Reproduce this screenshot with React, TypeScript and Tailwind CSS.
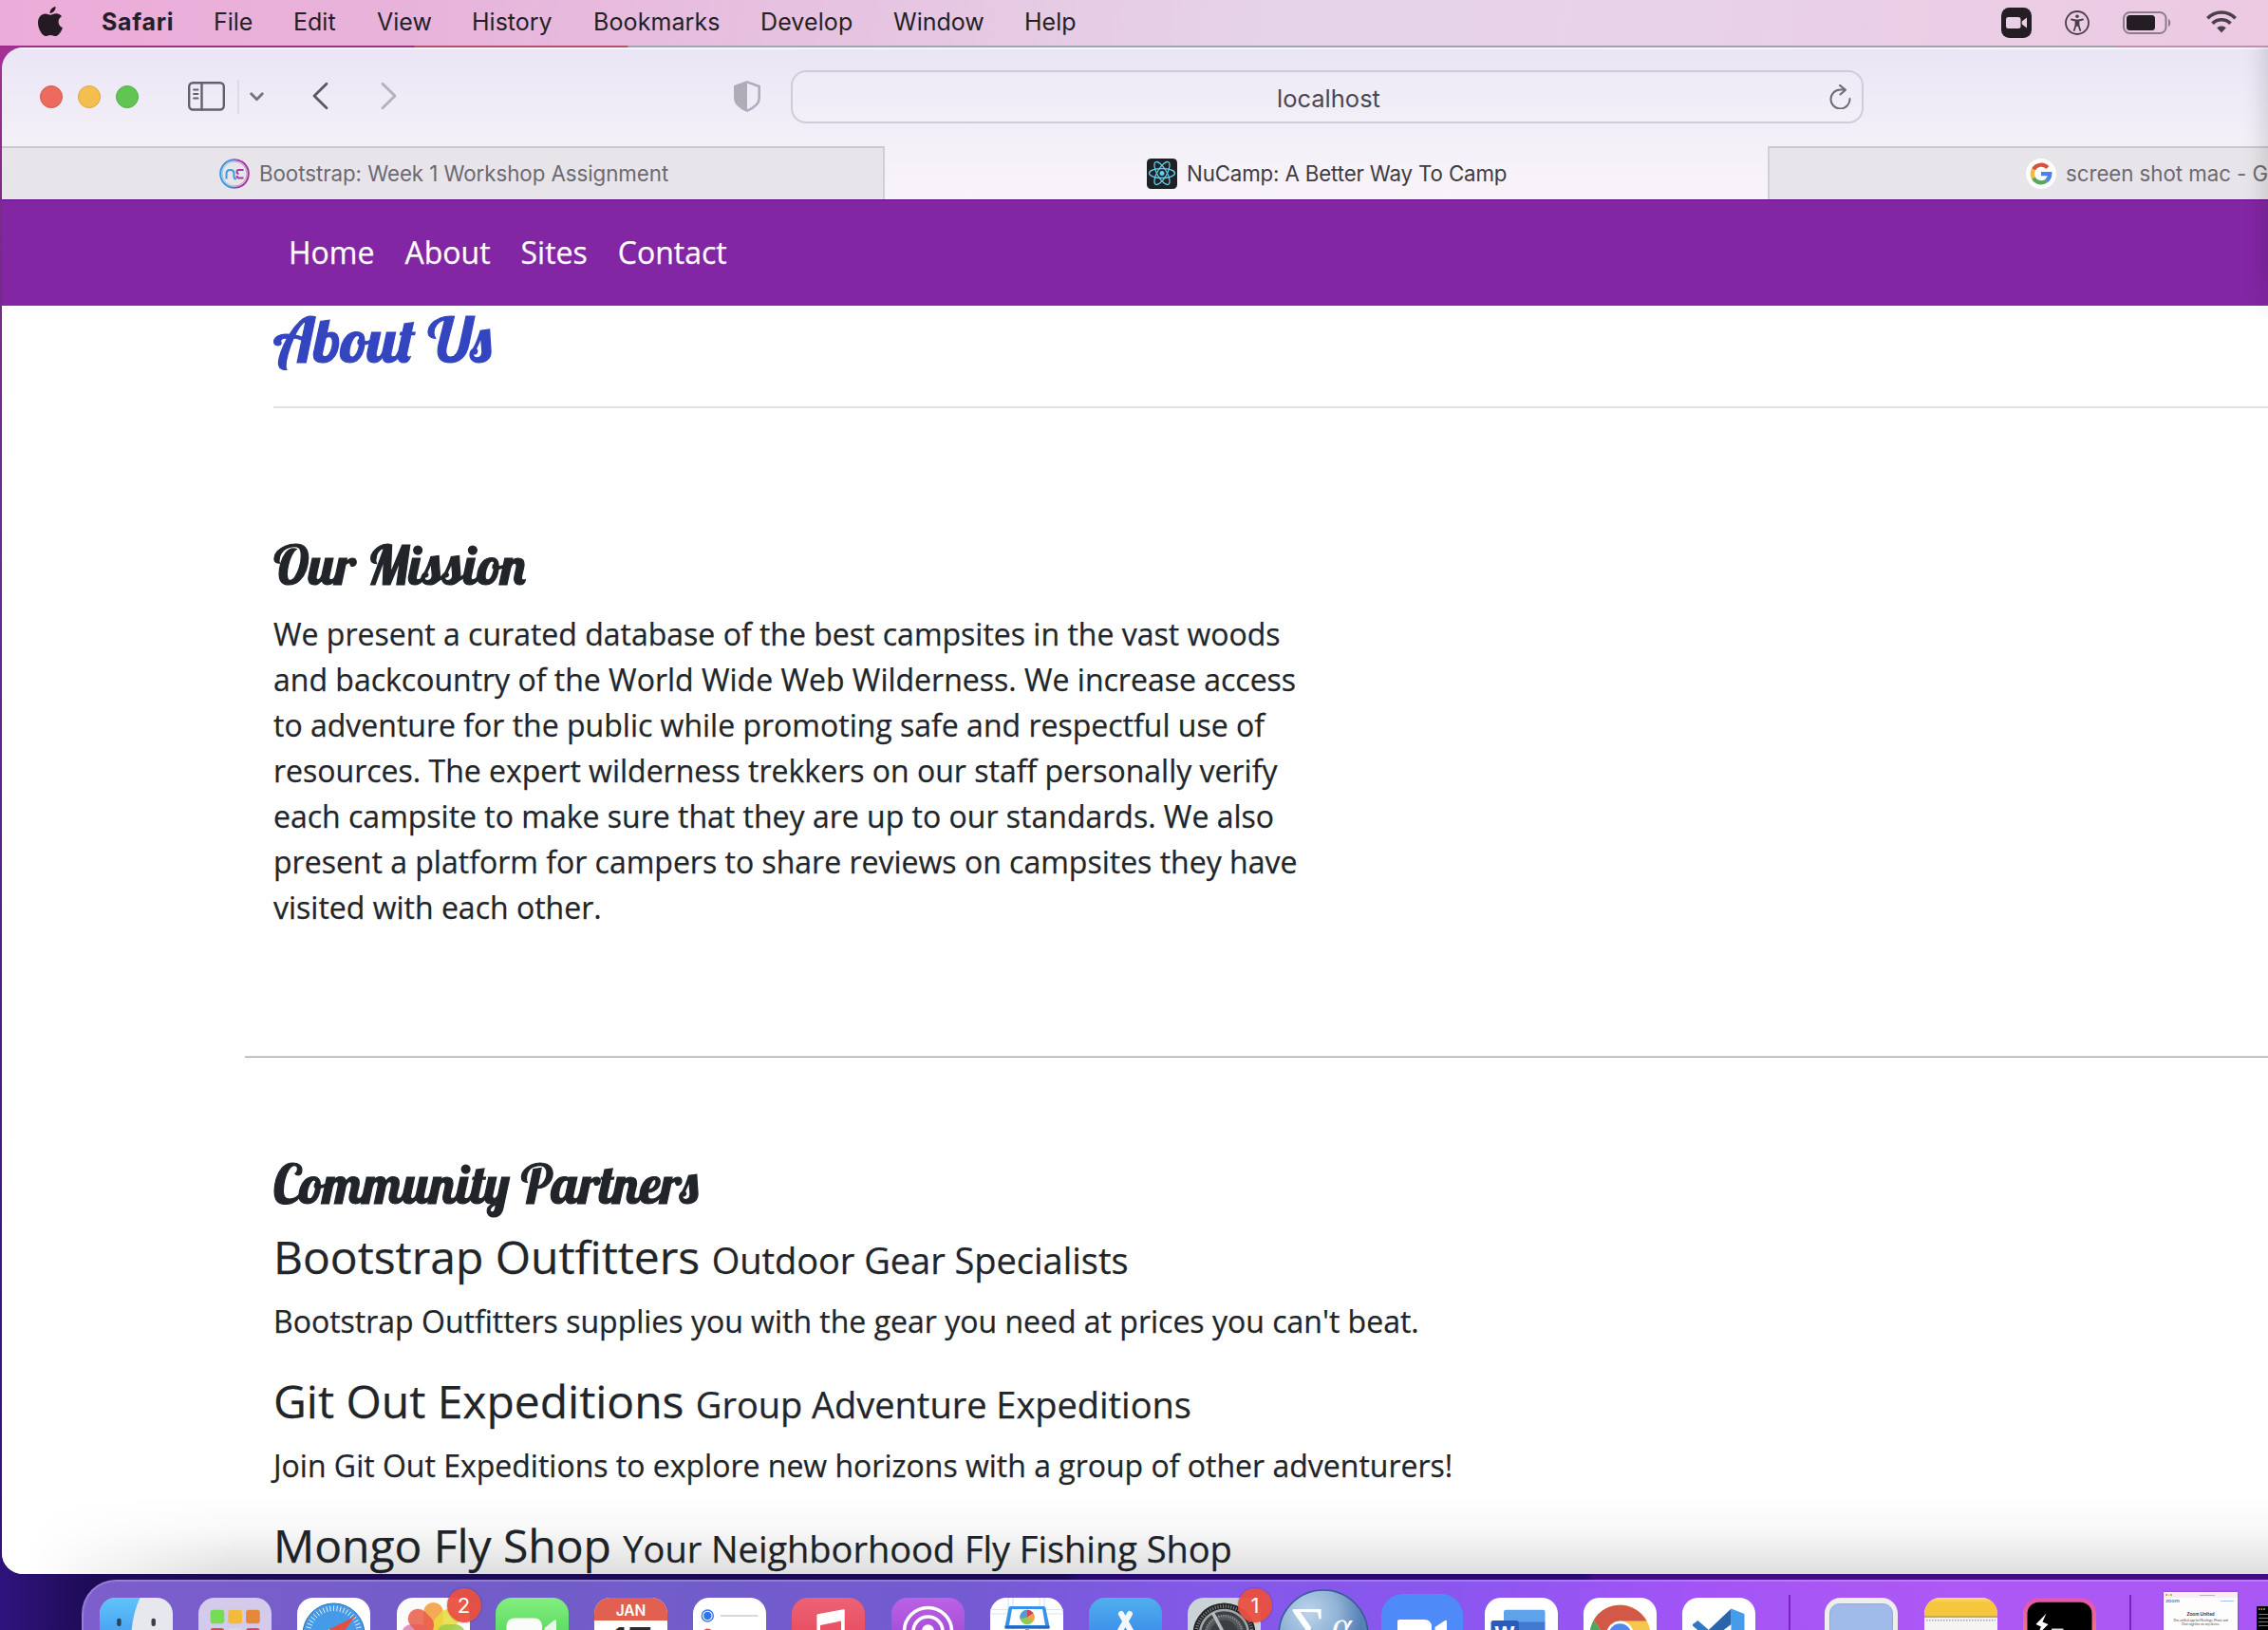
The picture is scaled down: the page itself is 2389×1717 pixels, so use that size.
import React from "react";

const UI = "font-['Inter','Liberation_Sans',sans-serif]";

const menus = [
  { label: "Safari", cls: "w-[118px] font-bold tracking-[0.7px]" },
  { label: "File", cls: "w-[84px]" },
  { label: "Edit", cls: "w-[88px]" },
  { label: "View", cls: "w-[100px]" },
  { label: "History", cls: "w-[128px]" },
  { label: "Bookmarks", cls: "w-[176px] tracking-[0.1px]" },
  { label: "Develop", cls: "w-[140px] tracking-[0.1px]" },
  { label: "Window", cls: "w-[138px]" },
  { label: "Help", cls: "w-[90px]" },
];

function MenuBar() {
  return (
    <header className="flex h-12 shrink-0 items-center bg-[linear-gradient(100deg,#ecacd9_0%,#e8b3db_18%,#e6c4e1_38%,#e6d3e8_56%,#e8d2e7_75%,#edc9e2_100%)] text-[#241f26]">
      <svg className="ml-[40px] mb-0.5 mr-[41px] h-8 w-[26px] shrink-0" viewBox="0 0 26 32" fill="#231a22">
        <path d="M18.6 0c.3 3.3-2.6 7-6 6.900C12.200 3.700 15.300.3 18.600 0z" />
        <path d="M13.300 8.700c1.300 0 3.200-1.500 5.900-1.500 2.300 0 4.500 1.200 5.800 3-5.100 3-4.200 10 1 12-1.500 4.300-4.700 8.900-7.700 8.900-1.900 0-2.700-1.200-5.100-1.200s-3.300 1.200-5 1.200C4.800 31.100 0 24 0 17.100c0-6.200 3.700-9.700 7.600-9.700 2.500 0 4.300 1.300 5.700 1.300z" />
      </svg>
      <nav className={`mb-[3px] flex text-[25px] leading-8 ${UI}`}>
        {menus.map((m) => (
          <span key={m.label} className={`shrink-0 whitespace-nowrap ${m.cls}`}>{m.label}</span>
        ))}
      </nav>
      <div className="ml-auto mr-[33px] flex items-center">
        <svg className="mr-[35px] size-8" viewBox="0 0 32 32">
          <rect width="32" height="32" rx="8.500" fill="#241e24" />
          <rect x="5" y="10" width="15.500" height="12" rx="2.500" fill="#ead0e6" />
          <path d="M21.800 14.500 27 10.500v11l-5.200-4z" fill="#ead0e6" />
        </svg>
        <svg className="mr-[35px] size-[26px]" viewBox="0 0 26 26" fill="none" stroke="#4a3f4b" strokeWidth="1.800" strokeLinecap="round" strokeLinejoin="round">
          <circle cx="13" cy="13" r="12" />
          <circle cx="13" cy="6.200" r="1.500" fill="#4a3f4b" strokeWidth=".6" />
          <path d="M7 9.500l4.500 1h3l4.500-1M11.500 10.500v5l-1.700 5.500M14.500 10.500v5l1.700 5.500M13 11v5" />
        </svg>
        <svg className="mr-[37px] h-6 w-[51px]" viewBox="0 0 51 24">
          <rect x="1" y="1" width="44.500" height="22" rx="6.500" fill="none" stroke="#8d7d8c" strokeWidth="2" />
          <rect x="4" y="4" width="30" height="16" rx="3.500" fill="#241e24" />
          <path d="M48 8c3 1 3 7 0 8z" fill="#8d7d8c" />
        </svg>
        <svg className="mb-0.5 h-6 w-8" viewBox="0 0 32 24" fill="none" stroke="#4a3f4b" strokeWidth="3.600">
          <path d="M1.300 8.300C9.500-.1 22.500-.1 30.700 8.300M6.500 13.700c5.400-5.300 13.600-5.300 19 0" />
          <path d="M11.200 18.300c2.800-2.400 6.800-2.400 9.600 0L16 23.500z" fill="#4a3f4b" stroke="none" />
        </svg>
      </div>
    </header>
  );
}

function Toolbar() {
  return (
    <div className="flex h-[104px] shrink-0 items-start border-t-2 border-white/70">
      <div className="ml-10 mt-[38px] flex gap-4">
        <span className="size-6 rounded-full border border-[#d9544a] bg-[#ed6a5e]" />
        <span className="size-6 rounded-full border border-[#dba53c] bg-[#f5bf4f]" />
        <span className="size-6 rounded-full border border-[#4fae45] bg-[#61c554]" />
      </div>
      <svg className="ml-[52px] mt-[34px] h-[31px] w-[39px]" viewBox="0 0 39 31" fill="none" stroke="#645f6b" strokeWidth="2.400" strokeLinecap="round">
        <rect x="1.200" y="1.200" width="36.600" height="28.300" rx="4" />
        <path d="M14.500 1.500v28" />
        <path d="M6 8.500h4.500M6 13h4.500M6 17.500h4.500" strokeWidth="1.800" />
      </svg>
      <span className="ml-[13px] mt-8 h-9 w-0.5 bg-[#dedae6]" />
      <svg className="ml-[11px] mt-[45px] h-[10px] w-[15px]" viewBox="0 0 15 10" fill="none" stroke="#77717f" strokeWidth="2.800" strokeLinecap="round" strokeLinejoin="round">
        <path d="M1.700 1.700l5.800 6 5.800-6" />
      </svg>
      <svg className="ml-[51px] mt-[34px] h-[30px] w-[17px]" viewBox="0 0 17 30" fill="none" stroke="#5c5763" strokeWidth="2.800" strokeLinecap="round" strokeLinejoin="round">
        <path d="M15 2.200 2 15l13 12.800" />
      </svg>
      <svg className="ml-[55px] mt-[34px] h-[30px] w-[17px]" viewBox="0 0 17 30" fill="none" stroke="#b5b0bd" strokeWidth="2.800" strokeLinecap="round" strokeLinejoin="round">
        <path d="M2 2.200 15 15 2 27.800" />
      </svg>
      <svg className="ml-[355px] mt-[33px] h-[33px] w-7" viewBox="0 0 28 33">
        <path d="M14 1.300 26.700 6v12.500C26.700 25 20 29 14 31.700 8 29 1.300 25 1.300 18.500V6z" fill="none" stroke="#b0abb8" strokeWidth="2.500" strokeLinejoin="round" />
        <path d="M14 1v31C7 29 .5 25 .5 18V5.500z" fill="#b0abb8" />
      </svg>
      <div className="ml-8 mt-[22px] flex h-14 w-[1130px] items-center rounded-2xl border-2 border-[#d0cbd9] bg-white/10">
        <span className={`ml-[510px] mt-[3px] text-[25.500px] leading-8 text-[#4b474f] ${UI}`}>localhost</span>
        <svg className="ml-auto mr-[11px] h-[26px] w-[23px]" viewBox="0 0 23 26" fill="none" stroke="#6f6a76" strokeWidth="2" strokeLinecap="round" strokeLinejoin="round">
          <path d="M21.500 15A10 10 0 1 1 11.500 5.500h5.500M11 .9l6 4.800-5.500 4.800" />
        </svg>
      </div>
    </div>
  );
}

function Tabs() {
  return (
    <div className={`flex h-14 shrink-0 text-[22.300px] leading-none tracking-[-0.05px] ${UI}`}>
      <div className="flex h-full w-[930px] items-center border-r-2 border-t-2 border-r-[#d3cfd7] border-t-[#cbc7d0] bg-[#e8e5ea] text-[#6d6971]">
        <svg className="ml-[229px] size-8 shrink-0" viewBox="0 0 32 32" fill="none" strokeWidth="2">
          <defs>
            <linearGradient id="nc" x1="0" x2="1">
              <stop offset=".35" stopColor="#3f97dc" />
              <stop offset=".65" stopColor="#a3389f" />
            </linearGradient>
          </defs>
          <circle cx="16" cy="16" r="14.800" stroke="url(#nc)" />
          <circle cx="16" cy="16" r="13" stroke="url(#nc)" strokeWidth=".8" opacity=".6" />
          <path d="M7.500 21.500v-5.500q0-4 4-4t4 4v3q0 2.500 2.500 2.500" stroke="#3f97dc" />
          <path d="M25.500 12H20.500q-2 0-2 2t2 2M25.500 20.500H21q-2.500 0-2.500-2.500" stroke="#a3389f" />
        </svg>
        <span className="ml-[10px] mt-[1px] whitespace-nowrap">Bootstrap: Week 1 Workshop Assignment</span>
      </div>
      <div className="flex h-full w-[930px] items-center pt-0.5 text-[#3f3b43]">
        <svg className="ml-[276px] size-8 shrink-0" viewBox="0 0 32 32" fill="none" stroke="#61cfee" strokeWidth="1.300">
          <rect width="32" height="32" rx="4.500" fill="#202124" stroke="none" />
          <circle cx="16" cy="15.500" r="2.500" fill="#61cfee" stroke="none" />
          <ellipse cx="16" cy="15.500" rx="13.500" ry="5" />
          <ellipse cx="16" cy="15.500" rx="13.500" ry="5" transform="rotate(60 16 15.500)" />
          <ellipse cx="16" cy="15.500" rx="13.500" ry="5" transform="rotate(120 16 15.500)" />
        </svg>
        <span className="ml-[10px] mt-[1px] whitespace-nowrap tracking-[-0.15px]">NuCamp: A Better Way To Camp</span>
      </div>
      <div className="flex h-full w-[527px] items-center overflow-hidden border-l-2 border-t-2 border-l-[#d3cfd7] border-t-[#cbc7d0] bg-[#e8e5ea] text-[#6d6971]">
        <svg className="ml-[270px] size-8 shrink-0" viewBox="0 0 32 32" fill="none" strokeWidth="4.200">
          <circle cx="16" cy="16" r="16" fill="white" />
          <path d="M22.800 9.600A9.300 9.300 0 0 0 7.900 11.500" stroke="#d9503f" />
          <path d="M7.900 11.500a9.700 9.700 0 0 0 0 9" stroke="#f3bc3f" />
          <path d="M7.900 20.500A9.300 9.300 0 0 0 21.800 23.300" stroke="#58a55c" />
          <path d="M21.800 23.300a9.600 9.600 0 0 0 3.500-7.200H16" stroke="#4d80ea" />
        </svg>
        <span className="ml-[10px] mt-[1px] whitespace-nowrap">screen shot mac - G</span>
      </div>
    </div>
  );
}

const partners = [
  { name: "Bootstrap Outfitters", tag: "Outdoor Gear Specialists", text: "Bootstrap Outfitters supplies you with the gear you need at prices you can't beat." },
  { name: "Git Out Expeditions", tag: "Group Adventure Expeditions", text: "Join Git Out Expeditions to explore new horizons with a group of other adventurers!" },
  { name: "Mongo Fly Shop", tag: "Your Neighborhood Fly Fishing Shop", text: "" },
];

const mission = [
  "We present a curated database of the best campsites in the vast woods",
  "and backcountry of the World Wide Web Wilderness. We increase access",
  "to adventure for the public while promoting safe and respectful use of",
  "resources. The expert wilderness trekkers on our staff personally verify",
  "each campsite to make sure that they are up to our standards. We also",
  "present a platform for campers to share reviews on campsites they have",
  "visited with each other.",
];

const SCRIPT = "font-['Lobster','Liberation_Serif',serif] font-medium whitespace-nowrap [-webkit-text-stroke:1.2px_currentColor]";

function Page() {
  return (
    <div className="relative flex min-h-0 flex-1 flex-col overflow-hidden bg-white font-['Open_Sans',sans-serif] text-[32px] leading-[48px] text-[#212529] [-webkit-text-stroke:0.25px_currentColor]">
      <nav className="flex h-28 shrink-0 items-center gap-8 bg-[#8326a4] pl-[302px] text-white shadow-[inset_0_1px_0_#5c0a86]">
        <span>Home</span>
        <span>About</span>
        <span>Sites</span>
        <span>Contact</span>
      </nav>
      <div className="ml-[286px] h-[108px] shrink-0 border-b-2 border-[#e2e2e2]">
        <h1 className={`text-[64px] leading-[72px] text-[#3445c0] ${SCRIPT}`}>About Us</h1>
      </div>
      <section className="ml-[286px] h-[682px] shrink-0 pt-[131px]">
        <h2 className={`h-[83px] text-[56px] leading-[68px] ${SCRIPT}`}>Our Mission</h2>
        <p className="whitespace-nowrap">
          {mission.map((l) => (
            <span key={l} className="block">{l}</span>
          ))}
        </p>
      </section>
      <hr className="ml-[256px] h-0.5 shrink-0 border-0 border-b border-[#999999] bg-[#e9e9e9]" />
      <section className="ml-[286px] shrink-0 pt-[99px]">
        <h2 className={`h-[82px] text-[56px] leading-[68px] ${SCRIPT}`}>Community Partners</h2>
        {partners.map((p) => (
          <div key={p.name} className="h-[152px] whitespace-nowrap">
            <h4 className="mb-[15px] h-[58px] text-[48px] leading-[58px] tracking-[-0.03px]">
              {p.name} <span className="text-[38px]">{p.tag}</span>
            </h4>
            <p>{p.text}</p>
          </div>
        ))}
      </section>
      <div className="absolute inset-x-0 bottom-0 h-20 bg-[linear-gradient(to_top,rgba(0,0,0,0.13),rgba(0,0,0,0.03)_55%,transparent)] [mask-image:linear-gradient(to_right,transparent_1%,black_10%)]" />
    </div>
  );
}

const ICON = "size-[77px] shrink-0";

function Tile({ fill = "white" }: { fill?: string }) {
  return <rect width="77" height="77" rx="17" fill={fill} />;
}

function Badge({ n }: { n: string }) {
  return (
    <span className={`absolute -top-[10px] left-[53px] flex size-9 items-center justify-center rounded-full bg-[#e9503f]/95 text-[22px] leading-none text-white shadow-[0_0_2px_rgba(0,0,0,0.4)] ${UI}`}>{n}</span>
  );
}

const petals = ["#f29a38", "#e8dc3c", "#9ccb46", "#5cb98f", "#6aa5d8", "#9c7cc6", "#d77fb4", "#ea5a48"];
const ticks = Array.from({ length: 48 }, (_, i) => i * 7.5);

function Dock() {
  return (
    <div className="ml-[86px] mt-1.5 flex h-[120px] w-[2400px] shrink-0 items-start gap-[27.200px] rounded-tl-[36px] border-l-2 border-t-2 border-white/20 bg-[linear-gradient(to_right,#7c5ecc_0%,#715dc8_20%,#735bd0_38%,#8458ea_50%,#8a56ef_60%,#a354f6_71%,#ae58f5_82%,#a857f4_100%)] bg-origin-border pl-[17px] pt-[17px]">
      <svg className={ICON} viewBox="0 0 77 77">
        <defs>
          <clipPath id="tile"><rect width="77" height="77" rx="17" /></clipPath>
          <linearGradient id="finder" x2="0" y2="1"><stop stopColor="#60c4fa" /><stop offset="1" stopColor="#2f7fe8" /></linearGradient>
        </defs>
        <Tile fill="#e6e8ed" />
        <path clipPath="url(#tile)" d="M0 0h42.500C36 14 33 30 33 46h10v31H0z" fill="url(#finder)" />
        <rect x="18.200" y="21.700" width="4.400" height="8.300" rx="2" fill="#2d4358" />
        <rect x="54.500" y="21.700" width="4.400" height="8.300" rx="2" fill="#3c4148" />
      </svg>
      <svg className={ICON} viewBox="0 0 77 77">
        <Tile fill="#d3cbe9" />
        <rect x="12.600" y="12.700" width="14.700" height="14.500" rx="3" fill="#77dc55" />
        <rect x="31.400" y="12.700" width="14.700" height="14.500" rx="3" fill="#f3ba3c" />
        <rect x="50.100" y="12.700" width="14.700" height="14.500" rx="3" fill="#e5883a" />
        <rect x="12.600" y="32" width="14.700" height="14.500" rx="3" fill="#e3483d" />
        <rect x="31.400" y="32" width="14.700" height="14.500" rx="3" fill="#cfdbe6" />
        <rect x="50.100" y="32" width="14.700" height="14.500" rx="3" fill="#e4446a" />
      </svg>
      <svg className={ICON} viewBox="0 0 77 77">
        <Tile />
        <circle cx="38.500" cy="38.500" r="32.500" fill="#459be8" stroke="#2d6fae" strokeWidth="1" />
        {ticks.map((a) => (
          <path key={a} d="M38.500 8.500v5.500" stroke="white" strokeWidth=".8" transform={`rotate(${a} 38.500 38.500)`} />
        ))}
        <path d="M61.500 19.500 33 33.500l10 10z" fill="#e4503f" />
        <path d="M15.500 57.500 33.500 33l10 10.500z" fill="#eef0f2" />
      </svg>
      <div className="relative">
        <svg className={ICON} viewBox="0 0 77 77">
          <Tile fill="#fbfbfb" />
          {petals.map((c, i) => (
            <rect key={c} x="28" y="5" width="21" height="30" rx="10.500" fill={c} opacity=".85" transform={`rotate(${i * 45} 38.500 38.500)`} />
          ))}
        </svg>
        <Badge n="2" />
      </div>
      <svg className={ICON} viewBox="0 0 77 77">
        <defs><linearGradient id="ft" x2="0" y2="1"><stop stopColor="#84ee7e" /><stop offset="1" stopColor="#33c648" /></linearGradient></defs>
        <Tile fill="url(#ft)" />
        <rect x="11.500" y="21.500" width="37.500" height="34" rx="8" fill="#fafcfa" />
        <path d="M51.500 32 62 23.500q2-1 2 1.500v27q0 2.500-2 1.500L51.500 45z" fill="#e9f7e8" />
      </svg>
      <svg className={ICON} viewBox="0 0 77 77">
        <Tile />
        <path clipPath="url(#tile)" d="M0 0h77v24H0z" fill="#e2604f" />
        <text x="38.500" y="18.500" textAnchor="middle" fontSize="15.500" fontWeight="600" fill="white" fontFamily="Inter">JAN</text>
        <text x="39" y="65" textAnchor="middle" fontSize="46" fill="#2b2b2d" fontFamily="Inter">17</text>
      </svg>
      <svg className={ICON} viewBox="0 0 77 77">
        <Tile />
        <circle cx="15.300" cy="19" r="6" fill="none" stroke="#3478f0" strokeWidth="1.400" />
        <circle cx="15.300" cy="19" r="4.200" fill="#2f73ee" />
        <path d="M29 19h39.500" stroke="#b4b4b8" strokeWidth="1.200" />
        <circle cx="15.300" cy="38.500" r="6" fill="#e3483d" />
      </svg>
      <svg className={ICON} viewBox="0 0 77 77">
        <defs><linearGradient id="mu" x2="0" y2="1"><stop stopColor="#ec6275" /><stop offset="1" stopColor="#e63b4c" /></linearGradient></defs>
        <Tile fill="url(#mu)" />
        <path d="M26.400 50V18.500q0-1 1-1.200L54.500 12.300q1.200-.2 1.200 1V50h-3.700V24.500L30 29v21z" fill="white" />
      </svg>
      <svg className={ICON} viewBox="0 0 77 77">
        <defs><linearGradient id="po" x2="0" y2="1"><stop stopColor="#bb62e6" /><stop offset="1" stopColor="#9038c8" /></linearGradient></defs>
        <Tile fill="url(#po)" />
        <circle cx="38.500" cy="35.500" r="25" fill="none" stroke="white" strokeWidth="3.600" />
        <circle cx="38.500" cy="35.500" r="15.500" fill="none" stroke="white" strokeWidth="3.600" />
        <circle cx="38.500" cy="34.500" r="6.300" fill="white" />
      </svg>
      <svg className={ICON} viewBox="0 0 77 77">
        <Tile />
        <path d="M19 0v77M24 0v77M52 0v77M57 0v77M0 12.500h77M0 17h77" stroke="#d3e8f5" strokeWidth="1.200" />
        <path d="M21 9h35.500q1.500 0 1.800 1.500l4.200 20q.2 2-1.500 2H17q-1.700 0-1.500-2l4-20Q19.500 9 21 9z" fill="#3793ea" />
        <path d="M23 12h32l3 17H20z" fill="white" />
        <path d="M15.500 29.500h47v3h-47z" fill="#2467bd" />
        <circle cx="39" cy="20.500" r="7.700" fill="#8fca52" />
        <path d="M39 20.500v-7.700a7.700 7.700 0 0 0-7.500 9.500z" fill="#4a9fd8" />
        <path d="M39 20.500v-7.700a7.700 7.700 0 0 1 6.500 3.800z" fill="#cd4360" />
        <path d="M39 20.500l6.500-3.900a7.700 7.700 0 0 1-.5 8.700z" fill="#f0a53d" />
        <path d="M37 32.500h4V50h-4z" fill="#9aa3ad" />
      </svg>
      <svg className={ICON} viewBox="0 0 77 77">
        <defs><linearGradient id="as" x2="0" y2="1"><stop stopColor="#4fb0ec" /><stop offset="1" stopColor="#2a6de8" /></linearGradient></defs>
        <Tile fill="url(#as)" />
        <path d="M34 17l17 30M43 17L26 47" stroke="#f3f8fc" strokeWidth="6" strokeLinecap="round" />
      </svg>
      <div className="relative">
        <svg className={ICON} viewBox="0 0 77 77">
          <Tile fill="#ccd3d7" />
          <circle cx="38.500" cy="38.500" r="33" fill="#1f2122" />
          <circle cx="38.500" cy="38.500" r="29.500" fill="none" stroke="#7d8183" strokeWidth="3.500" strokeDasharray="1.200 1.600" />
          <circle cx="38.500" cy="38.500" r="25.500" fill="#3e4143" stroke="#a3a7a9" strokeWidth="2.500" />
          <circle cx="38.500" cy="38.500" r="19.500" fill="#55585a" stroke="#858889" strokeWidth="2.500" strokeDasharray="1.500 1" />
          <circle cx="38.500" cy="38.500" r="15" fill="#3c3f41" />
          <path d="M38.500 38.500 26.500 16M38.500 38.500H64M38.500 38.500 25 62" stroke="#b9bdbf" strokeWidth="3.500" />
        </svg>
        <Badge n="1" />
      </div>
      <svg className="-ml-[9px] -mr-[14px] -mt-[9px] size-[96px] shrink-0" viewBox="0 0 96 96">
        <defs><radialGradient id="sg" cx=".33" cy=".25" r=".6"><stop stopColor="#bcd5ec" /><stop offset=".55" stopColor="#91b3d6" /><stop offset="1" stopColor="#5681b5" /></radialGradient></defs>
        <circle cx="48" cy="48" r="47" fill="url(#sg)" stroke="#345b94" strokeWidth="1.500" />
        <text x="13" y="64" fontSize="66" fill="white" fontFamily="Liberation Serif">Σ</text>
        <text x="57" y="52" fontSize="40" fontStyle="italic" fill="white" fontFamily="Liberation Serif">α</text>
      </svg>
      <svg className="-mr-[5px] -mt-1 size-[86px] shrink-0" viewBox="0 0 86 86">
        <rect width="86" height="86" rx="23" fill="#4f8bf8" />
        <path d="M17 29q0-2 2-2h26q8 0 8 8v23H25q-8 0-8-8zM56.500 35l10.500-7q2-1 2 1v28l-12.500-8z" fill="white" />
      </svg>
      <svg className={ICON} viewBox="0 0 77 77">
        <Tile />
        <path d="M20 15q0-2.300 2.300-2.300h39q2.200 0 2.200 2.300v11H20z" fill="#5ea3ea" />
        <path d="M20 25.600h43.500v13H20z" fill="#4079cf" />
        <rect x="6.500" y="24" width="29.300" height="29" rx="2.500" fill="#2a5bbb" />
        <text x="21" y="45.500" textAnchor="middle" fontSize="21" fontWeight="700" fill="white" fontFamily="Inter">W</text>
      </svg>
      <svg className={ICON} viewBox="0 0 77 77">
        <Tile />
        <circle cx="38.500" cy="39.500" r="32" fill="#f4c84f" />
        <path d="M10.800 23.500A32 32 0 0 1 66.500 24.500H38.500L25 45z" fill="#d25847" />
        <path d="M10.800 23.500 26 47l12.500 24.500A32 32 0 0 1 10.800 23.500z" fill="#4ea665" />
        <circle cx="38.500" cy="39" r="14.500" fill="white" />
        <circle cx="38.500" cy="39" r="11.800" fill="#5089ee" />
      </svg>
      <svg className={ICON} viewBox="0 0 77 77">
        <Tile />
        <path d="M51.500 11.500 65.500 17v42l-14 6z" fill="#469ce9" />
        <path d="M51.500 11.500 14 47l6 5 31.500-24z" fill="#2965a9" />
        <path d="M11 28 16.500 24l36.500 32-2 8.500-40-35z" fill="#2f78c4" />
      </svg>
      <span className="ml-[8px] mr-[9px] -mt-[3px] h-20 w-0.5 shrink-0 bg-[#7a22c4]" />
      <svg className={ICON} viewBox="0 0 77 77">
        <Tile fill="#eeeef0" />
        <rect x="5.500" y="6.500" width="66" height="66" rx="10" fill="#a0bbea" stroke="#8fa9d8" strokeWidth="1" />
      </svg>
      <svg className={ICON} viewBox="0 0 77 77">
        <defs><linearGradient id="no" x2="0" y2="1"><stop stopColor="#fadc73" /><stop offset=".26" stopColor="#f5c63e" /></linearGradient></defs>
        <Tile fill="#f5f4f2" />
        <path clipPath="url(#tile)" d="M0 0h77v20H0z" fill="url(#no)" />
        <path d="M0 20.200h77" stroke="#a88c4a" strokeWidth="1.200" />
        <path d="M2 23.700h73" stroke="#a9a8a6" strokeWidth="1.500" strokeDasharray="1.500 1.500" />
      </svg>
      <svg className={ICON} viewBox="0 0 77 77">
        <defs><linearGradient id="wp" x2="0" y2="1"><stop stopColor="#e653b0" /><stop offset=".6" stopColor="#ee8070" /></linearGradient></defs>
        <Tile fill="url(#wp)" />
        <rect x="4.500" y="4.700" width="68" height="68" rx="12" fill="black" />
        <path d="M24.500 16.500 13.500 28l5.500 2.500L14.500 40 26.500 28l-6-2.500z" fill="white" />
        <path d="M30 33.500h12.500" stroke="#ddd" strokeWidth="2" />
      </svg>
      <span className="ml-[8px] mr-[7px] -mt-[3px] h-20 w-0.5 shrink-0 bg-[#7a22c4]" />
      <div className="-mt-1.5 h-16 w-[78px] shrink-0 overflow-hidden bg-[#fdfdfe] font-['Lato',sans-serif] shadow-[0_0_2px_rgba(0,0,0,0.3)]">
        <div className="flex h-[6px] items-center gap-px bg-[#f6eef4] pl-0.5">
          <span className="size-[1.500px] rounded-full bg-[#ed6a5e]" />
          <span className="size-[1.500px] rounded-full bg-[#f5bf4f]" />
          <span className="size-[1.500px] rounded-full bg-[#61c554]" />
          <span className="ml-7 h-px w-4 bg-[#bbb4bd]" />
        </div>
        <div className="flex items-center pl-0.5 pr-1 text-[6px] font-bold leading-[6px] text-[#3a86f0]">
          zoom<span className="ml-auto h-px w-[14px] bg-[#9fc2f4]" />
        </div>
        <p className="pt-[9px] text-center text-[5px] font-bold leading-[5px] text-[#333]">Zoom United</p>
        <p className="px-2 pt-[3px] text-center text-[3.200px] leading-[3.600px] text-[#444]">One unified app for Meetings, Phone and Chat together on any device.</p>
      </div>
      <div className="-ml-[7px] mt-[9px] h-16 w-[78px] shrink-0 bg-black pl-0.5 pt-[2px]">
        <div className="flex gap-px">
          <span className="size-[1.500px] rounded-full bg-[#ed6a5e]" />
          <span className="size-[1.500px] rounded-full bg-[#f5bf4f]" />
          <span className="size-[1.500px] rounded-full bg-[#61c554]" />
        </div>
        <div className="mt-1 h-4 w-5 bg-[repeating-linear-gradient(to_bottom,#777_0px,#777_1px,#000_1px,#000_4px)]" />
      </div>
    </div>
  );
}

export default function App() {
  return (
    <div className="relative flex h-[1717px] w-[2389px] flex-col overflow-hidden bg-[linear-gradient(to_bottom,#b2329c_0%,#7d2a86_12%,#662a8a_35%,#3a1a80_75%,#2c1179_100%)]">
      <MenuBar />
      <div className="h-0.5 shrink-0 bg-[linear-gradient(to_right,#9c2f88_0px,#9c2f88_436px,#b8506e_437px,#b8506e_661px,#a3a6b5_662px,#a3a0ae_2228px,#c48fae_2229px)]" />
      <div className="relative ml-0.5 flex h-[1608px] w-[2500px] shrink-0 flex-col overflow-hidden rounded-[22px] bg-[linear-gradient(to_bottom,#e9e5f5_0px,#f4f0f8_100px,#f8f4f9_160px)]">
        <Toolbar />
        <Tabs />
        <Page />
        <div className="absolute left-[2361px] top-0 h-[290px] w-[26px] bg-[linear-gradient(to_right,transparent,rgba(0,0,0,0.02)_40%,rgba(0,0,0,0.09))] [mask-image:linear-gradient(to_bottom,black_80%,transparent)]" />
      </div>
      <div className="flex h-[59px] shrink-0 flex-col bg-[linear-gradient(to_right,#2f137d_0px,#1d0b55_100px,#1b0a50_1120px,#2a0a72_1140px,#2a0a72_1670px,#450d85_1680px,#450d85_2389px)]">
        <Dock />
      </div>
    </div>
  );
}
